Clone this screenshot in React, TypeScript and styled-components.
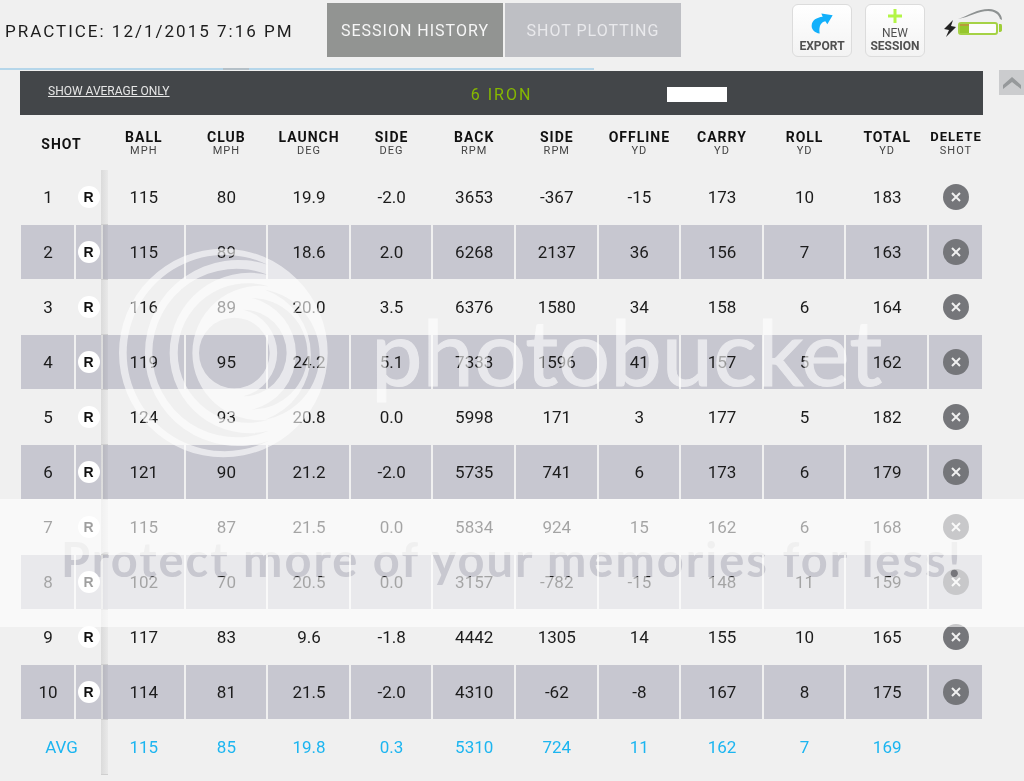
import React from "react";
import styled, { createGlobalStyle } from "styled-components";

const GlobalStyle = createGlobalStyle`
  *, *::before, *::after { box-sizing: border-box; }
  body {
    margin: 0;
    background: #f0f0f0;
    color: #1c1c1c;
    font-family: Roboto, "Liberation Sans", sans-serif;
  }
  button { font: inherit; cursor: pointer; }
`;

const Page = styled.div`
  position: relative;
  min-height: 100vh;
  overflow: hidden;
`;

const Header = styled.header`
  display: grid;
  grid-template-columns: minmax(auto, 327px) auto 1fr;
  align-items: start;
  height: 68px;
  padding-top: 3px;
`;

const Title = styled.h1`
  margin: 0;
  padding-left: 5px;
  font-size: 17px;
  font-weight: 400;
  line-height: 56px;
  letter-spacing: 2px;
  white-space: nowrap;
`;

const Tabs = styled.nav`
  display: flex;
  gap: 2px;
`;

const Tab = styled.button<{ $active?: boolean }>`
  width: 176px;
  height: 54px;
  padding: 0;
  border: 0;
  background: ${(p) => (p.$active ? "#929492" : "#bebfc4")};
  color: ${(p) => (p.$active ? "#f6f6f6" : "#e9e9ec")};
  font-size: 16px;
  letter-spacing: 1px;
  white-space: nowrap;
`;

const Actions = styled.div`
  display: flex;
  justify-content: flex-end;
  gap: 13px;
  padding: 1px 18px 0 0;
`;

const Action = styled.button`
  display: flex;
  flex-direction: column;
  align-items: center;
  justify-content: flex-end;
  width: 60px;
  height: 53px;
  padding: 0 0 3px;
  border: 1px solid #dcdcdc;
  border-radius: 6px;
  background: linear-gradient(#fff, #f3f3f3);
  color: #505050;
  font-size: 12px;
  line-height: 13px;
  white-space: nowrap;

  svg { display: block; }
  b { font-weight: 700; }
`;

const ExportIcon = styled.svg`
  margin-bottom: 5px;
`;

const Battery = styled.svg`
  display: block;
  margin-left: 4px;
`;

const Progress = styled.div`
  display: flex;
  width: 58%;
  height: 2px;
  padding-left: 223px;
  background: #b5d6ea;
`;

const ProgressMark = styled.div`
  width: 26px;
  background: #b4c0c8;
`;

const Content = styled.div`
  display: flex;
  align-items: flex-start;
  gap: 16px;
  padding-left: 20px;
`;

const Panel = styled.main`
  flex: 1;
  padding-top: 1px;
`;

const ScrollUp = styled.button`
  display: grid;
  place-items: center;
  width: 25px;
  height: 25px;
  padding: 0;
  border: 0;
  background: #cbccce;
`;

const ClubBar = styled.div`
  display: grid;
  grid-template-columns: 1fr auto 1fr;
  align-items: center;
  height: 44px;
  background: #434649;
`;

const AverageLink = styled.a`
  display: block;
  padding: 0 0 4px 28px;
  color: #e6e6e6;
  font-size: 12px;
  line-height: 16px;
`;

const ClubName = styled.h2`
  margin: 0;
  padding-top: 3px;
  color: #86b800;
  font-size: 16px;
  font-weight: 400;
  letter-spacing: 2px;
`;

const Blank = styled.div`
  width: 60px;
  height: 15px;
  margin: 3px 0 0 135px;
  background: #fff;
`;

const Table = styled.table`
  width: 100%;
  table-layout: fixed;
  border-collapse: separate;
  border-spacing: 0;
`;

const Column = styled.col<{ $width?: number }>`
  width: ${(p) => (p.$width ? `${p.$width}px` : "auto")};
`;

const Head = styled.th`
  height: 55px;
  padding: 2px 0 0 1px;
  color: #111;
  font-size: 14px;
  font-weight: 700;
  line-height: 14px;
  letter-spacing: 1px;
  text-align: center;
`;

const DeleteLabel = styled.span`
  display: block;
  font-size: 13px;
`;

const Unit = styled.span`
  display: block;
  color: #444;
  font-size: 11px;
  font-weight: 400;
  line-height: 13px;
`;

const Row = styled.tr<{ $shaded?: boolean }>`
  --cell: ${(p) => (p.$shaded ? "#c7c7d0" : "#f0f0f0")};
`;

const Cell = styled.td`
  position: relative;
  height: 55px;
  padding: 0 0 0 1px;
  border: 0 solid #f0f0f0;
  border-width: 0 1px 1px;
  background: var(--cell);
  font-size: 17px;
  text-align: center;
`;

const edge = `
  &::after {
    content: "";
    position: absolute;
    z-index: 1;
    top: 0;
    right: -7px;
    width: 7px;
    height: 55px;
    border-bottom: 1px solid #cfcfcf;
    background: linear-gradient(90deg, rgba(0, 0, 0, 0.09), rgba(0, 0, 0, 0.03));
  }
`;

const HandCell = styled(Cell)`
  padding: 0;
  ${edge}
`;

const AverageLabel = styled(Cell)`
  color: #1cb5f0;
  ${edge}
`;

const AverageCell = styled(Cell)`
  color: #1cb5f0;
`;

const Hand = styled.span`
  display: block;
  width: 22px;
  height: 22px;
  margin: 0 auto;
  border-radius: 50%;
  background: #fff;
  color: #111;
  font-family: "Liberation Sans", sans-serif;
  font-size: 14px;
  font-weight: 700;
  line-height: 22px;
`;

const Delete = styled.button`
  display: grid;
  place-items: center;
  width: 26px;
  height: 26px;
  margin: 0 auto;
  padding: 0;
  border: 0;
  border-radius: 50%;
  background: #75767a;
`;

const Brand = styled.div`
  position: absolute;
  z-index: 2;
  top: 243px;
  left: 115px;
  display: flex;
  align-items: center;
  gap: 38px;
  height: 220px;
  color: #fff;
  font: 400 92px/110px Lato, sans-serif;
  opacity: 0.6;
  pointer-events: none;
`;

const BrandName = styled.span`
  padding-bottom: 4px;
  -webkit-text-stroke: 1px #fff;
`;

const Banner = styled.div`
  position: absolute;
  z-index: 2;
  top: 499px;
  left: 0;
  right: 0;
  height: 128px;
  background: rgba(255, 255, 255, 0.6);
  pointer-events: none;
`;

/* Burning with #666 cancels the banner's 60% white, so the letters look cut out of it. */
const BannerText = styled.p`
  position: absolute;
  z-index: 3;
  top: 499px;
  left: 0;
  right: 0;
  margin: 0;
  color: #666;
  font: 700 47px/120px Lato, sans-serif;
  letter-spacing: 2px;
  text-align: center;
  white-space: nowrap;
  mix-blend-mode: color-burn;
  pointer-events: none;
`;

const columns = [
  ["BALL", "MPH"],
  ["CLUB", "MPH"],
  ["LAUNCH", "DEG"],
  ["SIDE", "DEG"],
  ["BACK", "RPM"],
  ["SIDE", "RPM"],
  ["OFFLINE", "YD"],
  ["CARRY", "YD"],
  ["ROLL", "YD"],
  ["TOTAL", "YD"],
];

const shots = [
  ["115", "80", "19.9", "-2.0", "3653", "-367", "-15", "173", "10", "183"],
  ["115", "89", "18.6", "2.0", "6268", "2137", "36", "156", "7", "163"],
  ["116", "89", "20.0", "3.5", "6376", "1580", "34", "158", "6", "164"],
  ["119", "95", "24.2", "5.1", "7333", "1596", "41", "157", "5", "162"],
  ["124", "93", "20.8", "0.0", "5998", "171", "3", "177", "5", "182"],
  ["121", "90", "21.2", "-2.0", "5735", "741", "6", "173", "6", "179"],
  ["115", "87", "21.5", "0.0", "5834", "924", "15", "162", "6", "168"],
  ["102", "70", "20.5", "0.0", "3157", "-782", "-15", "148", "11", "159"],
  ["117", "83", "9.6", "-1.8", "4442", "1305", "14", "155", "10", "165"],
  ["114", "81", "21.5", "-2.0", "4310", "-62", "-8", "167", "8", "175"],
];

const averages = ["115", "85", "19.8", "0.3", "5310", "724", "11", "162", "7", "169"];

function Swirl() {
  return (
    <svg width="218" height="220" viewBox="0 0 654 660" aria-hidden="true">
      <path
        fill="#fff"
        fillRule="evenodd"
        d="M12 330A313 313 0 1 1 638 330A313 313 0 1 1 12 330Z
           M460 66A294.5 294.5 0 1 0 460 594A279.2 279.2 0 1 1 460 66Z
           M460 96A252.7 252.7 0 1 0 460 564A240.5 240.5 0 1 1 460 96Z
           M460 130A209.5 209.5 0 1 0 460 530A201.7 201.7 0 1 1 460 130Z
           M252 330A106 106 0 1 1 464 330A106 106 0 1 1 252 330Z
           M385 200A130 130 0 0 1 385 460A134 134 0 0 0 385 200Z
           M410 165A167 167 0 0 1 410 500A172 172 0 0 0 410 165Z
           M450 140A198 198 0 0 1 450 530A207 207 0 0 0 450 140Z"
      />
    </svg>
  );
}

export default function App() {
  return (
    <Page>
      <GlobalStyle />
      <Header>
        <Title>PRACTICE: 12/1/2015 7:16 PM</Title>
        <Tabs>
          <Tab $active>SESSION HISTORY</Tab>
          <Tab>SHOT PLOTTING</Tab>
        </Tabs>
        <Actions>
          <Action>
            <ExportIcon width="24" height="23" viewBox="78 34 72 68" aria-hidden="true">
              <path
                fill="#12b0fb"
                d="M112 38L146 43L130 70L124 61C110 64 104 76 107 98C92 96 82 86 83 74C84 58 98 50 116 48Z"
              />
            </ExportIcon>
            <b>EXPORT</b>
          </Action>
          <Action>
            <svg width="16" height="18" viewBox="0 0 16 18" aria-hidden="true">
              <path stroke="#b3f547" strokeWidth="3" d="M8 0V14M1 7H15" />
            </svg>
            NEW
            <b>SESSION</b>
          </Action>
          <Battery width="64" height="36" viewBox="0 0 64 36" role="img" aria-label="Battery">
            <path fill="#222" d="M11 16L2 25L7 26L4 33L14 23L9 22Z" />
            <path
              fill="#8e9292"
              d="M16 15C28 11 35 5 47 5C55 5 60 10 60 16L58 15C57 10 52 7 46 7C36 7 28 13 16 15Z"
            />
            <rect x="17" y="19" width="38" height="11" rx="2" fill="#fcfcfc" stroke="#a5d245" strokeWidth="2" />
            <rect x="18" y="20" width="9" height="9" fill="#96c62e" />
            <rect x="18" y="20" width="9" height="2" fill="#b89a3c" />
            <path fill="#9fce38" d="M57 20H59Q60 20 60 22V26Q60 28 57 28Z" />
          </Battery>
        </Actions>
      </Header>
      <Progress>
        <ProgressMark />
      </Progress>
      <Content>
        <Panel>
          <ClubBar>
            <AverageLink href="#average">SHOW AVERAGE ONLY</AverageLink>
            <ClubName>6 IRON</ClubName>
            <Blank />
          </ClubBar>
          <Table>
            <colgroup>
              <Column $width={55} />
              <Column $width={27} />
              {columns.map((_, i) => (
                <Column key={i} />
              ))}
              <Column $width={55} />
            </colgroup>
            <thead>
              <tr>
                <Head colSpan={2}>SHOT</Head>
                {columns.map(([label, unit], i) => (
                  <Head key={i}>
                    {label}
                    <Unit>{unit}</Unit>
                  </Head>
                ))}
                <Head>
                  <DeleteLabel>DELETE</DeleteLabel>
                  <Unit>SHOT</Unit>
                </Head>
              </tr>
            </thead>
            <tbody>
              {shots.map((values, i) => (
                <Row key={i} $shaded={i % 2 === 1}>
                  <Cell>{i + 1}</Cell>
                  <HandCell>
                    <Hand>R</Hand>
                  </HandCell>
                  {values.map((value, j) => (
                    <Cell key={j}>{value}</Cell>
                  ))}
                  <Cell>
                    <Delete aria-label={`Delete shot ${i + 1}`}>
                      <svg width="10" height="10" viewBox="0 0 10 10" aria-hidden="true">
                        <path stroke="#f0f0f0" strokeWidth="2" d="M1 1L9 9M9 1L1 9" />
                      </svg>
                    </Delete>
                  </Cell>
                </Row>
              ))}
              <Row>
                <AverageLabel colSpan={2}>AVG</AverageLabel>
                {averages.map((value, j) => (
                  <AverageCell key={j}>{value}</AverageCell>
                ))}
                <Cell />
              </Row>
            </tbody>
          </Table>
        </Panel>
        <ScrollUp aria-label="Scroll up">
          <svg width="18" height="14" viewBox="0 0 18 14" aria-hidden="true">
            <path fill="#96999b" d="M0 9L9 1L18 9V13L9 6L0 13Z" />
          </svg>
        </ScrollUp>
      </Content>
      <Brand>
        <Swirl />
        <BrandName>photobucket</BrandName>
      </Brand>
      <Banner />
      <BannerText>Protect more of your memories for less!</BannerText>
    </Page>
  );
}
